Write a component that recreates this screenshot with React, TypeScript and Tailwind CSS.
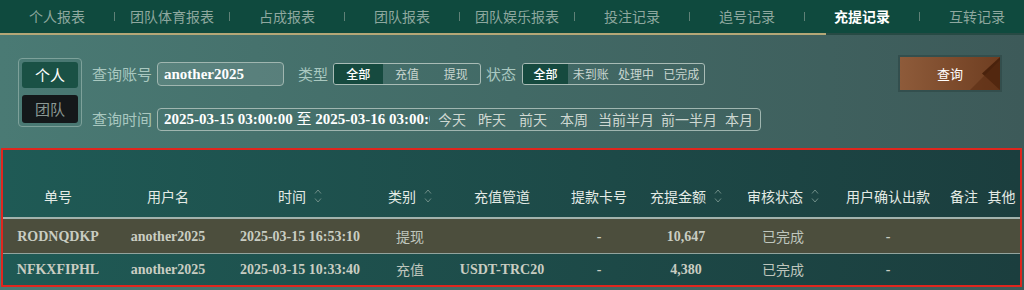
import React from "react";

const tabs = ["个人报表", "团队体育报表", "占成报表", "团队报表", "团队娱乐报表", "投注记录", "追号记录", "充提记录", "互转记录"];

const serif = "font-['Liberation_Serif','Noto_Sans_CJK_SC',serif] font-bold";
const cols = "grid grid-cols-[110px_110px_154px_66px_118px_76px_98px_96px_114px_38px_37px]";

function SortIcon() {
  return (
    <svg width="8" height="16" viewBox="0 0 8 16" className="ml-[8px] shrink-0">
      <path d="M1 5.5 L4 2 L7 5.5" fill="none" stroke="#6f8e88" strokeWidth="1" />
      <path d="M1 10.5 L4 14 L7 10.5" fill="none" stroke="#6f8e88" strokeWidth="1" />
    </svg>
  );
}

function Head({ label, sort }: { label: string; sort?: boolean }) {
  return (
    <div className="flex items-center justify-center whitespace-nowrap text-[14px] text-[#e4ebe6]">
      <span>{label}</span>
      {sort && <SortIcon />}
    </div>
  );
}

function Cell({ v, latin }: { v: string; latin?: boolean }) {
  return (
    <div
      className={
        "flex items-center justify-center whitespace-nowrap text-[14px] " +
        (latin ? serif + " text-[#c9cdc2]" : "text-[#bfc6bd]")
      }
    >
      {v}
    </div>
  );
}

const rows = [
  { id: "RODNQDKP", user: "another2025", time: "2025-03-15 16:53:10", type: "提现", ch: "", card: "-", amt: "10,647", st: "已完成", conf: "-", bg: "bg-[#4c4e3d]" },
  { id: "NFKXFIPHL", user: "another2025", time: "2025-03-15 10:33:40", type: "充值", ch: "USDT-TRC20", card: "-", amt: "4,380", st: "已完成", conf: "-", bg: "" },
];

function Segment({ items }: { items: string[] }) {
  return (
    <div className="flex h-[22px] border border-[#a9bcb6] rounded-[3px] overflow-hidden">
      {items.map((t, i) => (
        <div
          key={t}
          className={
            "flex-1 flex items-center justify-center text-[12px] " +
            (i === 0 ? "bg-[#164a3f] text-white font-medium" : "text-[#c9d6d0]")
          }
        >
          {t}
        </div>
      ))}
    </div>
  );
}

export default function App() {
  const quick = [
    { t: "今天", ml: "ml-[8px]" },
    { t: "昨天", ml: "ml-[12px]" },
    { t: "前天", ml: "ml-[13px]" },
    { t: "本周", ml: "ml-[13px]" },
    { t: "当前半月", ml: "ml-[10px]" },
    { t: "前一半月", ml: "ml-[7px]" },
    { t: "本月", ml: "ml-[8px]" },
  ];
  return (
    <div className="w-[1024px] h-[290px] overflow-hidden bg-gradient-to-r from-[#4a7a74] via-[#426a66] to-[#3d5a59] font-['Noto_Sans_CJK_SC',sans-serif]">
      {/* nav */}
      <div className="flex h-[33px] bg-[#0f4a3e] items-center overflow-hidden">
        {tabs.map((t, i) => (
          <React.Fragment key={t}>
            <div
              className={
                "w-[114px] shrink-0 text-center text-[14px] " +
                (t === "充提记录" ? "text-white font-bold" : "text-[#8ea89f]")
              }
            >
              {t}
            </div>
            {i < tabs.length - 1 && <div className="w-px h-[9px] shrink-0 bg-[#5f8177]" />}
          </React.Fragment>
        ))}
      </div>
      <div className="flex h-[2px]">
        <div className="w-[826px] bg-[#b4a777]" />
        <div className="flex-1 bg-[#274a44]" />
      </div>

      {/* filters */}
      <div className="flex items-start h-[113px] pl-[18px] pt-[23px]">
        <div className="w-[64px] h-[69px] border border-[#7da19a] rounded-[4px] p-[3px] flex flex-col">
          <div className="h-[26px] bg-[#1a5145] rounded-[3px] flex items-center justify-center text-[15px] text-white">个人</div>
          <div className="mt-[7px] h-[28px] bg-[#14181a] rounded-[3px] flex items-center justify-center text-[15px] text-[#8b9894]">团队</div>
        </div>
        <div className="ml-[10px] mt-[4px] flex flex-col">
          <div className="flex items-center h-[24px]">
            <span className="text-[15px] text-[#a9c8c0] w-[60px]">查询账号</span>
            <div className={"ml-[5px] w-[127px] h-[24px] border border-[#a0b6b0] rounded-[4px] bg-white/10 flex items-center pl-[6px] text-[15px] text-white " + serif}>
              another2025
            </div>
            <span className="ml-[14px] text-[15px] text-[#a9c8c0] w-[30px]">类型</span>
            <div className="ml-[5px] w-[148px]">
              <Segment items={["全部", "充值", "提现"]} />
            </div>
            <span className="ml-[5px] text-[15px] text-[#a9c8c0] w-[30px]">状态</span>
            <div className="ml-[6px] w-[183px]">
              <Segment items={["全部", "未到账", "处理中", "已完成"]} />
            </div>
          </div>
          <div className="flex items-center h-[23px] mt-[22px]">
            <span className="text-[15px] text-[#a9c8c0] w-[60px]">查询时间</span>
            <div className="ml-[5px] w-[604px] h-[23px] border border-[#a0b6b0] rounded-[4px] flex items-center">
              <div className={"w-[272px] shrink-0 overflow-hidden whitespace-nowrap pl-[6px] text-[15px] text-white " + serif}>
                2025-03-15 03:00:00 <span className="font-normal">至</span> 2025-03-16 03:00:0
              </div>
              {quick.map((q) => (
                <span key={q.t} className={q.ml + " text-[14px] text-[#cfd8d2] whitespace-nowrap"}>
                  {q.t}
                </span>
              ))}
            </div>
          </div>
        </div>
        <button className="ml-auto mr-[24px] mt-[-1px] w-[100px] h-[33px] relative overflow-hidden bg-gradient-to-r from-[#8e5b3a] to-[#6f3e21] text-white text-[13px] shadow-[0_0_0_2px_rgba(45,70,68,0.6)]">
          <svg className="absolute inset-0" width="100" height="33" viewBox="0 0 100 33">
            <polygon points="100,0 100,33 82,16.5" fill="#4a220c" />
            <polygon points="70,33 100,3 100,33" fill="#5a2c12" opacity="0.55" />
          </svg>
          <span className="relative">查询</span>
        </button>
      </div>

      {/* table */}
      <div className="ml-[1px] w-[1021px] border-2 border-[#e0261e] bg-gradient-to-r from-[#1f5a55] to-[#1b3e3e]">
        <div className={cols + " h-[67px] pt-[25px]"}>
          <Head label="单号" />
          <Head label="用户名" />
          <Head label="时间" sort />
          <Head label="类别" sort />
          <Head label="充值管道" />
          <Head label="提款卡号" />
          <Head label="充提金额" sort />
          <Head label="审核状态" sort />
          <Head label="用户确认出款" />
          <Head label="备注" />
          <Head label="其他" />
        </div>
        <div className="h-[2px] bg-[#a2b3ad]" />
        {rows.map((r, i) => (
          <React.Fragment key={r.id}>
            {i > 0 && <div className="h-px bg-[#93a49e]" />}
            <div className={cols + " " + (i === 0 ? "h-[34px] " : "h-[31px] ") + r.bg}>
              <Cell v={r.id} latin />
              <Cell v={r.user} latin />
              <Cell v={r.time} latin />
              <Cell v={r.type} />
              <Cell v={r.ch} latin />
              <Cell v={r.card} latin />
              <Cell v={r.amt} latin />
              <Cell v={r.st} />
              <Cell v={r.conf} latin />
              <Cell v="" />
              <Cell v="" />
            </div>
          </React.Fragment>
        ))}
      </div>
    </div>
  );
}
